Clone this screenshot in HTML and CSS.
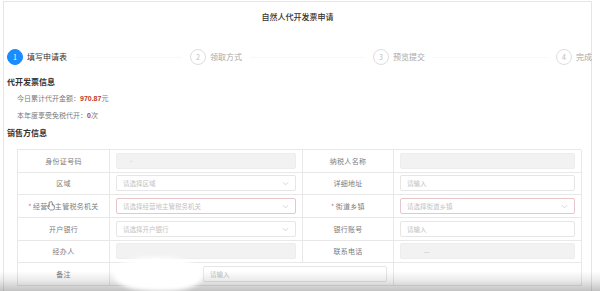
FILE: index.html
```html
<!DOCTYPE html>
<html lang="zh">
<head>
<meta charset="utf-8">
<title>自然人代开发票申请</title>
<link rel="stylesheet" href="styles.css">
</head>
<body>
<div class="page">
  <div class="card">
    <h1 class="title">自然人代开发票申请</h1>
    <div class="steps">
      <div class="step active"><span class="num">1</span><span class="step-label">填写申请表</span><span class="line"></span></div>
      <div class="step"><span class="num">2</span><span class="step-label">领取方式</span><span class="line"></span></div>
      <div class="step"><span class="num">3</span><span class="step-label">预览提交</span><span class="line"></span></div>
      <div class="step last"><span class="num">4</span><span class="step-label">完成</span></div>
    </div>
    <h2 class="section">代开发票信息</h2>
    <p class="info">今日累计代开金额：<b class="red">970.87</b>元</p>
    <p class="info">本年度享受免税代开：<b class="red">0</b>次</p>
    <h2 class="section s2">销售方信息</h2>
    <div class="form">
      <div class="cell label">身份证号码</div>
      <div class="cell field"><div class="input disabled"><span class="dash">-</span></div></div>
      <div class="cell label">纳税人名称</div>
      <div class="cell field"><div class="input disabled"></div></div>

      <div class="cell label">区域</div>
      <div class="cell field"><div class="input select">请选择区域<svg class="chev" viewBox="0 0 8 5" width="7" height="5"><path d="M1 1l3 3 3-3" fill="none" stroke="#c4c4c4" stroke-width="0.8"/></svg></div></div>
      <div class="cell label">详细地址</div>
      <div class="cell field"><div class="input">请输入</div></div>

      <div class="cell label cursor-cell"><span class="req">*</span>经营地主管税务机关<svg class="cursor" viewBox="0 0 9 11" width="8" height="10"><path d="M2.5 1v5.5l-1-1c-.6-.5-1.3 0-.9.7l2 3c.4.6 1 .8 1.6.8h2.3c1 0 1.7-.8 1.7-1.8v-3c0-.5-.8-.5-.8 0v-.5c0-.5-.8-.5-.8 0v-.3c0-.5-.8-.5-.8 0V1c0-.6-1-.6-1 0z" fill="#fff" stroke="#555" stroke-width=".7"/></svg></div>
      <div class="cell field"><div class="input select error">请选择经营地主管税务机关<svg class="chev" viewBox="0 0 8 5" width="7" height="5"><path d="M1 1l3 3 3-3" fill="none" stroke="#c4c4c4" stroke-width="0.8"/></svg></div></div>
      <div class="cell label"><span class="req">*</span>街道乡镇</div>
      <div class="cell field"><div class="input select error">请选择街道乡镇<svg class="chev" viewBox="0 0 8 5" width="7" height="5"><path d="M1 1l3 3 3-3" fill="none" stroke="#c4c4c4" stroke-width="0.8"/></svg></div></div>

      <div class="cell label">开户银行</div>
      <div class="cell field"><div class="input select">请选择开户银行<svg class="chev" viewBox="0 0 8 5" width="7" height="5"><path d="M1 1l3 3 3-3" fill="none" stroke="#c4c4c4" stroke-width="0.8"/></svg></div></div>
      <div class="cell label">银行账号</div>
      <div class="cell field"><div class="input">请输入</div></div>

      <div class="cell label">经办人</div>
      <div class="cell field"><div class="input disabled"></div></div>
      <div class="cell label">联系电话</div>
      <div class="cell field"><div class="input disabled"><span class="dash dash2">—</span></div></div>

      <div class="cell label">备注</div>
      <div class="cell field wide"><div class="input remark">请输入</div></div>
      <div class="cell field"></div>
    </div>
  </div>
  <div class="shade"></div>
  <div class="blob"></div>
</div>
</body>
</html>
```

FILE: styles.css
```css
html, body {
  margin: 0;
  padding: 0;
  background: #fff;
}
body {
  font-family: "Noto Sans CJK SC", "Noto Sans", sans-serif;
}
.page {
  position: relative;
  width: 600px;
  height: 291px;
  overflow: hidden;
}
.card {
  margin: 1px 0 0 3px;
  width: 589px;
  height: 320px;
  box-sizing: border-box;
  border: 1px solid #e6e6e6;
}
.title {
  margin: 0;
  padding-top: 9px;
  font-size: 8px;
  line-height: 12px;
  font-weight: 500;
  color: #333;
  text-align: center;
}
.steps {
  display: flex;
  margin-top: 26px;
  padding-left: 3px;
}
.step {
  width: 183px;
  display: flex;
  align-items: center;
  flex: none;
}
.step.last {
  width: auto;
}
.num {
  width: 16px;
  height: 16px;
  box-sizing: border-box;
  border-radius: 50%;
  border: 1px solid #dedede;
  color: #bdbdbd;
  font-size: 7px;
  display: flex;
  align-items: center;
  justify-content: center;
  flex: none;
}
.step.active .num {
  background: #1a8cff;
  border-color: #1a8cff;
  color: #fff;
}
.step-label {
  margin-left: 4px;
  font-size: 8px;
  line-height: 12px;
  color: #a8a8a8;
  white-space: nowrap;
}
.step.active .step-label {
  color: #333;
}
.line {
  flex: 1;
  height: 1px;
  margin: 0 8px;
  background: #f8f8f8;
}
.section {
  margin: 11px 0 0 0;
  padding-left: 3px;
  font-size: 8px;
  line-height: 12px;
  font-weight: 600;
  color: #333;
}
.section.s2 {
  margin-top: 5px;
}
.info {
  margin: 4px 0 0 0;
  padding-left: 13px;
  font-size: 7px;
  line-height: 12px;
  color: #7a7a7a;
}
.red {
  color: #c0392b;
  font-weight: 700;
  font-family: "Liberation Sans", "Noto Sans", sans-serif;
}
.form {
  margin: 10px 0 0 13px;
  width: 564px;
  display: grid;
  grid-template-columns: 92px 193px 91px 188px;
  grid-auto-rows: 22.67px;
  border-top: 1px solid #e8e8e8;
  border-left: 1px solid #e8e8e8;
  box-sizing: border-box;
}
.cell {
  box-sizing: border-box;
  border-right: 1px solid #e8e8e8;
  border-bottom: 1px solid #e8e8e8;
  display: flex;
  align-items: center;
}
.label {
  justify-content: center;
  font-size: 7px;
  letter-spacing: 0.3px;
  color: #7d7d7d;
  white-space: nowrap;
}
.cursor-cell {
  position: relative;
}
.cursor {
  position: absolute;
  left: 29px;
  top: 6px;
}
.req {
  color: #e06c75;
  margin-right: 1px;
}
.field {
  padding: 0 6px;
}
.field.wide {
  grid-column: span 2;
}
.input {
  flex: 1;
  height: 16px;
  box-sizing: border-box;
  border: 1px solid #e6e6e6;
  border-radius: 2px;
  display: flex;
  align-items: center;
  padding: 0 6px;
  font-size: 6.5px;
  color: #c2c2c2;
  white-space: nowrap;
  position: relative;
}
.input.disabled {
  background: #f2f2f2;
  border-color: #ededed;
}
.input.error {
  border-color: #e6c6ca;
}
.input.remark {
  margin-left: 87px;
}
.chev {
  position: absolute;
  right: 6px;
  top: 5px;
}
.dash {
  color: #b5b5b5;
  font-size: 6px;
  margin-left: 7px;
}
.dash2 {
  margin-left: 17px;
}
.shade {
  position: absolute;
  left: 0;
  right: 0;
  bottom: 0;
  height: 20px;
  background: linear-gradient(to bottom, rgba(0,0,0,0) 0%, rgba(0,0,0,0.08) 45%, rgba(0,0,0,0.24) 100%);
}
.blob {
  position: absolute;
  left: 114px;
  top: 257px;
  width: 88px;
  height: 34px;
  border-radius: 45% 50% 40% 45%;
  background: #fff;
  filter: blur(2px);
}
```
